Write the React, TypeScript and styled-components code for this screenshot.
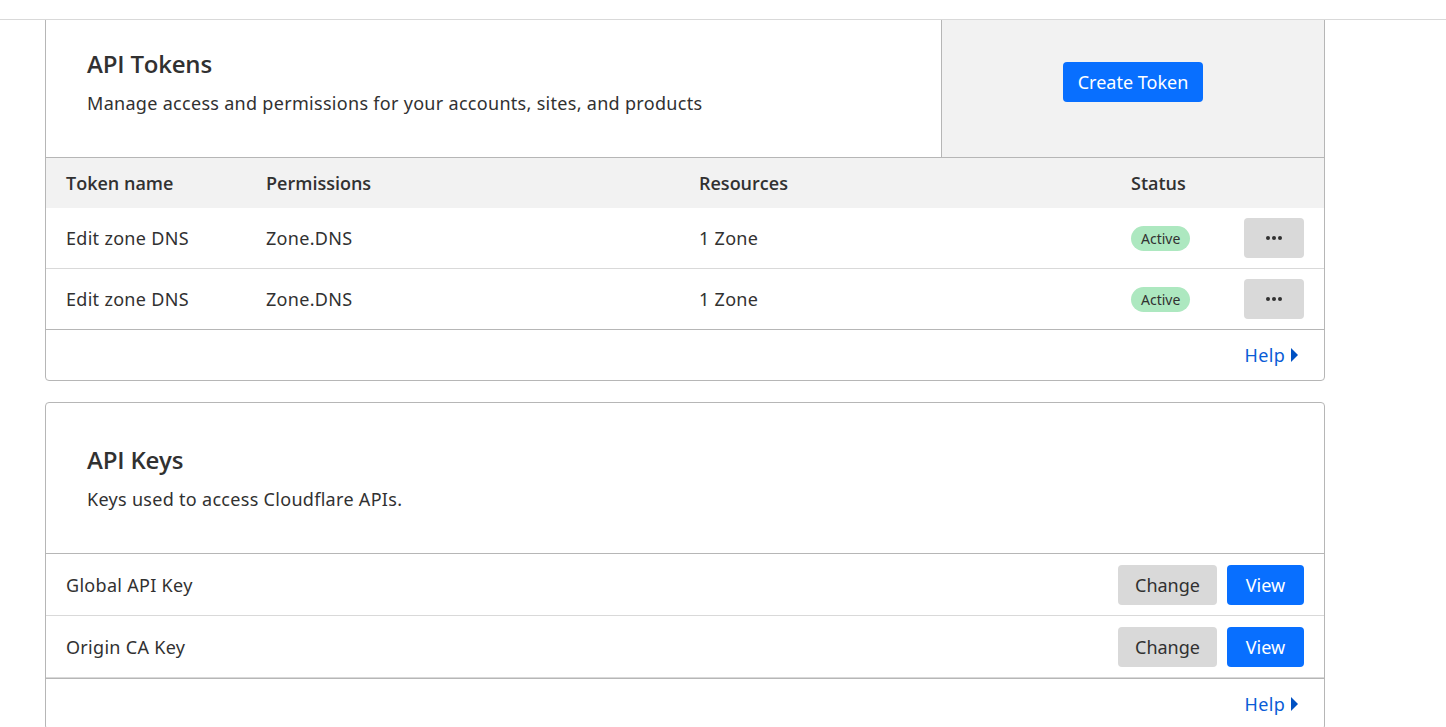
import React from 'react'
import styled, { createGlobalStyle } from 'styled-components'

const GlobalStyle = createGlobalStyle`
  body {
    margin: 0;
    background: #fff;
    color: #313131;
    font-family: 'Noto Sans', 'Open Sans', sans-serif;
  }
`

interface Token {
  name: string
  permissions: string
  resources: string
  status: string
}

const tokens: Token[] = [
  { name: 'Edit zone DNS', permissions: 'Zone.DNS', resources: '1 Zone', status: 'Active' },
  { name: 'Edit zone DNS', permissions: 'Zone.DNS', resources: '1 Zone', status: 'Active' },
]

const keys = ['Global API Key', 'Origin CA Key']

const HelpLink: React.FC = () => (
  <StyledHelp href="#">
    Help
    <svg width="9" height="16" viewBox="0 0 9 16">
      <path d="M1 1 L8 8 L1 15 Z" fill="#0051c3" />
    </svg>
  </StyledHelp>
)

const DotsIcon: React.FC = () => (
  <svg width="18" height="6" viewBox="0 0 18 6">
    <circle cx="3" cy="3" r="2" fill="#313131" />
    <circle cx="9" cy="3" r="2" fill="#313131" />
    <circle cx="15" cy="3" r="2" fill="#313131" />
  </svg>
)

const App: React.FC = () => {
  return (
    <>
      <GlobalStyle />
      <StyledTopBar />
      <StyledPage>
        <StyledCard>
          <StyledCardHeader $aside>
            <StyledHeaderText>
              <StyledTitle>API Tokens</StyledTitle>
              <StyledSubtitle>Manage access and permissions for your accounts, sites, and products</StyledSubtitle>
            </StyledHeaderText>
            <StyledHeaderAside>
              <StyledButton $variant="primary" $width={140}>Create Token</StyledButton>
            </StyledHeaderAside>
          </StyledCardHeader>

          <StyledHeadRow>
            <span>Token name</span>
            <span>Permissions</span>
            <span>Resources</span>
            <span>Status</span>
            <span />
          </StyledHeadRow>
          {tokens.map((t, i) => (
            <StyledTokenRow key={i} $last={i === tokens.length - 1}>
              <span>{t.name}</span>
              <span>{t.permissions}</span>
              <span>{t.resources}</span>
              <span>
                <StyledPill>{t.status}</StyledPill>
              </span>
              <StyledDotsButton aria-label="More">
                <DotsIcon />
              </StyledDotsButton>
            </StyledTokenRow>
          ))}

          <StyledFooter>
            <HelpLink />
          </StyledFooter>
        </StyledCard>

        <StyledCard>
          <StyledCardHeader>
            <StyledHeaderText>
              <StyledTitle>API Keys</StyledTitle>
              <StyledSubtitle>Keys used to access Cloudflare APIs.</StyledSubtitle>
            </StyledHeaderText>
          </StyledCardHeader>

          {keys.map((k) => (
            <StyledKeyRow key={k}>
              <span>{k}</span>
              <StyledButton $variant="secondary" $width={99}>Change</StyledButton>
              <StyledButton $variant="primary" $width={77}>View</StyledButton>
            </StyledKeyRow>
          ))}

          <StyledFooter>
            <HelpLink />
          </StyledFooter>
        </StyledCard>
      </StyledPage>
    </>
  )
}

const StyledTopBar = styled.div`
  position: fixed;
  top: 0;
  left: 0;
  right: 0;
  height: 19px;
  background: #fff;
  border-bottom: 1px solid #d9d9d9;
  z-index: 10;
`

const StyledPage = styled.div`
  display: flex;
  flex-direction: column;
  gap: 21px;
  width: 1280px;
  padding: 6px 0 40px 45px;
`

const StyledCard = styled.section`
  border: 1px solid #b6b6b6;
  border-radius: 4px;
  background: #fff;
  overflow: hidden;
`

const StyledCardHeader = styled.header<{ $aside?: boolean }>`
  display: grid;
  grid-template-columns: ${(p) => (p.$aside ? '1fr 383px' : '1fr')};
  border-bottom: 1px solid #b6b6b6;
`

const StyledHeaderText = styled.div`
  padding: 42px 41px 41px;
`

const StyledTitle = styled.h2`
  margin: 0;
  font-family: 'Open Sans', 'Noto Sans', sans-serif;
  font-size: 24px;
  line-height: 30px;
  font-weight: 600;
  letter-spacing: -0.2px;
`

const StyledSubtitle = styled.p`
  margin: 11px 0 0;
  font-size: 18px;
  line-height: 26px;
  font-weight: 400;
  letter-spacing: 0.3px;
`

const StyledHeaderAside = styled.div`
  display: flex;
  align-items: center;
  justify-content: center;
  background: #f2f2f2;
  border-left: 1px solid #b6b6b6;
`

const StyledButton = styled.button<{ $variant: 'primary' | 'secondary'; $width: number }>`
  width: ${(p) => p.$width}px;
  height: 40px;
  padding: 0;
  border: none;
  border-radius: 4px;
  font-family: inherit;
  font-size: 18px;
  cursor: pointer;
  background: ${(p) => (p.$variant === 'primary' ? '#086fff' : '#d9d9d9')};
  color: ${(p) => (p.$variant === 'primary' ? '#fff' : '#313131')};
`

const tokenColumns = '200px 433px 432px 1fr 60px'

const StyledHeadRow = styled.div`
  display: grid;
  grid-template-columns: ${tokenColumns};
  align-items: center;
  height: 50px;
  padding: 0 20px;
  background: #f2f2f2;
  font-family: 'Open Sans', 'Noto Sans', sans-serif;
  font-size: 18px;
  font-weight: 600;
`

const StyledTokenRow = styled.div<{ $last?: boolean }>`
  display: grid;
  grid-template-columns: ${tokenColumns};
  align-items: center;
  height: 60px;
  padding: 0 20px;
  font-size: 18px;
  letter-spacing: 0.3px;
  border-bottom: ${(p) => (p.$last ? 'none' : '1px solid #d9d9d9')};
`

const StyledPill = styled.span`
  display: inline-flex;
  align-items: center;
  height: 25px;
  padding: 0 10px;
  border-radius: 13px;
  background: #ade8c0;
  font-size: 14px;
  letter-spacing: 0;
`

const StyledDotsButton = styled.button`
  display: flex;
  align-items: center;
  justify-content: center;
  width: 60px;
  height: 40px;
  border: none;
  border-radius: 4px;
  background: #d9d9d9;
  cursor: pointer;
`

const StyledKeyRow = styled.div`
  display: grid;
  grid-template-columns: 1fr auto auto;
  align-items: center;
  gap: 10px;
  height: 61px;
  padding: 0 20px;
  font-size: 18px;
  letter-spacing: 0.3px;
  border-bottom: 1px solid #d9d9d9;
`

const StyledFooter = styled.footer`
  display: flex;
  justify-content: flex-end;
  align-items: center;
  height: 50px;
  padding: 0 25px;
  border-top: 1px solid #b6b6b6;
`

const StyledHelp = styled.a`
  display: inline-flex;
  align-items: center;
  gap: 5px;
  color: #0a5cd6;
  font-size: 18px;
  letter-spacing: 0.3px;
  text-decoration: none;
`

export default App
